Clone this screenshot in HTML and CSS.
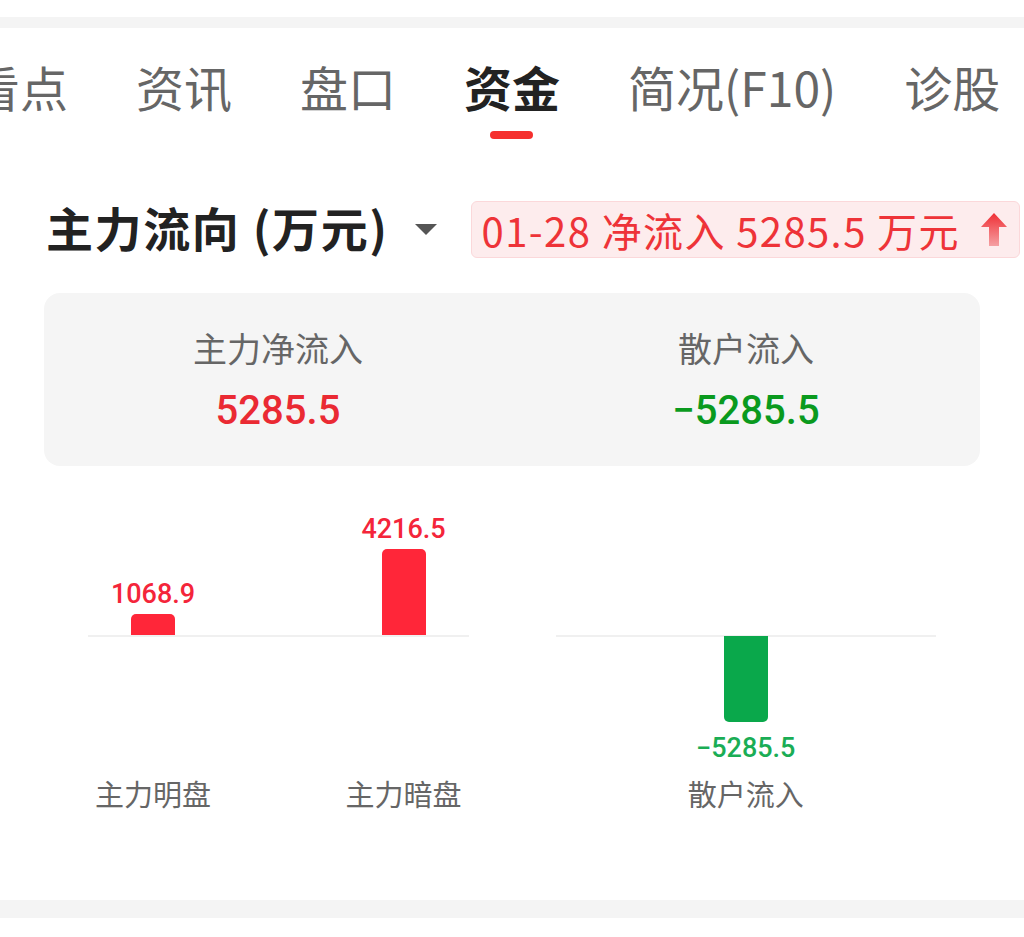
FILE: index.html
```html
<!DOCTYPE html>
<html lang="zh-CN">
<head>
    <meta charset="UTF-8">
    <meta name="viewport" content="width=device-width, initial-scale=1.0">
    <title>资金</title>
    <link rel="stylesheet" href="styles.css">
</head>
<body>
    <div class="top-band"></div>

    <div class="tabs">
        <div class="tab first">看点</div>
        <div class="tab">资讯</div>
        <div class="tab">盘口</div>
        <div class="tab active">资金<span class="tab-line"></span></div>
        <div class="tab">简况(F10)</div>
        <div class="tab">诊股</div>
    </div>

    <div class="content">
        <div class="title-row">
            <h2 class="title">主力流向 (万元)</h2>
            <span class="caret"></span>
            <div class="badge">
                <span>01-28 净流入 5285.5 万元</span>
                <svg class="badge-arrow" width="26" height="33" viewBox="0 0 26 33">
                    <defs>
                        <linearGradient id="arrowFill" x1="0" y1="0" x2="0" y2="1">
                            <stop offset="0" stop-color="#ef2f35"/>
                            <stop offset="1" stop-color="#f5a0a3"/>
                        </linearGradient>
                    </defs>
                    <path d="M13 0 L26 14 H18 V33 H8 V14 H0 Z" fill="url(#arrowFill)"/>
                </svg>
            </div>
        </div>

        <div class="summary">
            <div class="summary-item">
                <div class="summary-label">主力净流入</div>
                <div class="summary-value up">5285.5</div>
            </div>
            <div class="summary-item">
                <div class="summary-label">散户流入</div>
                <div class="summary-value down">−5285.5</div>
            </div>
        </div>

        <div class="chart">
            <div class="group">
                <div class="upper">
                    <div class="cell">
                        <div class="bar-label up">1068.9</div>
                        <div class="bar bar-up" style="height: 22px"></div>
                    </div>
                    <div class="cell">
                        <div class="bar-label up">4216.5</div>
                        <div class="bar bar-up" style="height: 87px"></div>
                    </div>
                </div>
                <div class="axis"></div>
                <div class="lower">
                    <div class="cell"></div>
                    <div class="cell"></div>
                </div>
                <div class="names">
                    <div class="cell name">主力明盘</div>
                    <div class="cell name">主力暗盘</div>
                </div>
            </div>

            <div class="group single">
                <div class="upper">
                    <div class="cell"></div>
                </div>
                <div class="axis"></div>
                <div class="lower">
                    <div class="cell">
                        <div class="bar bar-down" style="height: 86px"></div>
                        <div class="bar-label down">−5285.5</div>
                    </div>
                </div>
                <div class="names">
                    <div class="cell name">散户流入</div>
                </div>
            </div>
        </div>
    </div>

    <div class="bottom-band"></div>
</body>
</html>
```

FILE: styles.css
```css
* {
    margin: 0;
    padding: 0;
    box-sizing: border-box;
}

body {
    font-family: "Noto Sans CJK SC", "Noto Sans", sans-serif;
    background: #fff;
    color: #222;
    width: 1024px;
    overflow: hidden;
}

.top-band {
    margin-top: 17px;
    height: 11px;
    background: #f4f4f4;
}

/* tabs */
.tabs {
    display: flex;
    gap: 68px;
    padding-top: 30px;
    white-space: nowrap;
}

.tab {
    position: relative;
    font-size: 48px;
    line-height: 56px;
    color: #666;
    flex-shrink: 0;
}

.tab.first {
    margin-left: -28px;
}

.tab.active {
    color: #222;
    font-weight: 700;
}

.tab-line {
    position: absolute;
    left: 50%;
    top: 73px;
    width: 43px;
    height: 8px;
    margin-left: -22px;
    border-radius: 4px;
    background: #f5302e;
}

.content {
    padding: 0 44px;
}

/* title row */
.title-row {
    display: flex;
    align-items: center;
    margin-top: 87px;
    height: 57px;
    white-space: nowrap;
}

.title {
    font-size: 47px;
    font-weight: 700;
    color: #222;
    margin-left: 2px;
    padding-bottom: 6px;
    letter-spacing: 1.6px;
}

.caret {
    width: 0;
    height: 0;
    margin-left: 26px;
    border-left: 11px solid transparent;
    border-right: 11px solid transparent;
    border-top: 11px solid #555;
}

.badge {
    display: flex;
    align-items: center;
    gap: 21px;
    flex-shrink: 0;
    margin-left: 34px;
    height: 57px;
    padding: 0 12px 0 10px;
    background: #fdeced;
    border: 1px solid #fbd8da;
    border-radius: 6px;
    color: #ee3338;
    font-size: 40px;
    letter-spacing: 1.4px;
}

.badge-arrow {
    display: block;
}

/* summary card */
.summary {
    display: grid;
    grid-template-columns: 1fr 1fr;
    margin-top: 35px;
    height: 173px;
    padding-top: 33px;
    background: #f5f5f5;
    border-radius: 16px;
}

.summary-item {
    text-align: center;
}

.summary-label {
    font-size: 34px;
    line-height: 44px;
    color: #666;
}

.summary-value {
    margin-top: 16px;
    font-family: Roboto, "Liberation Sans", sans-serif;
    font-size: 40px;
    line-height: 50px;
    font-weight: 500;
}

.summary-value.up {
    color: #ea2a33;
}

.summary-value.down {
    color: #0a9a1e;
}

/* chart */
.chart {
    display: grid;
    grid-template-columns: 1fr 1fr;
    gap: 87px;
    padding: 0 44px;
    margin-top: 30px;
}

.group {
    display: flex;
    flex-direction: column;
}

.upper,
.lower,
.names {
    display: flex;
    justify-content: space-between;
    padding: 0 20px;
}

.group.single .upper,
.group.single .lower,
.group.single .names {
    justify-content: center;
}

.upper {
    height: 140px;
    align-items: flex-end;
}

.lower {
    height: 126px;
    align-items: flex-start;
}

.cell {
    width: 90px;
    display: flex;
    flex-direction: column;
    align-items: center;
}

.axis {
    height: 2px;
    margin-top: -1px;
    background: #f0f0f0;
}

.bar {
    width: 44px;
}

.bar-up {
    background: #ff2639;
    border-radius: 5px 5px 0 0;
}

.bar-down {
    margin-top: -1px;
    background: #0aa84b;
    border-radius: 0 0 5px 5px;
}

.bar-label {
    font-family: Roboto, "Liberation Sans", sans-serif;
    font-size: 27px;
    line-height: 28px;
    font-weight: 500;
    white-space: nowrap;
}

.bar-label.up {
    color: #f4253a;
    margin-bottom: 6px;
}

.bar-label.down {
    color: #1aad55;
    margin-top: 12px;
}

.names {
    margin-top: 12px;
}

.name {
    font-size: 29px;
    line-height: 36px;
    color: #666;
    white-space: nowrap;
}

.bottom-band {
    margin-top: 89px;
    height: 18px;
    background: #f4f4f4;
}
```
